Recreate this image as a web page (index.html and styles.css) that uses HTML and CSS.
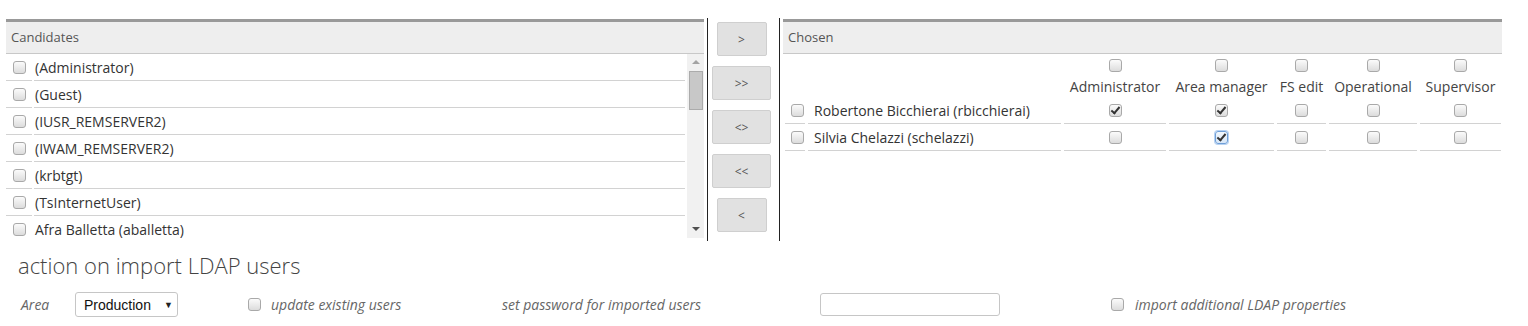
FILE: index.html
```html
<!DOCTYPE html>
<html lang="en">

<head>
    <meta charset="UTF-8">
    <title>Import LDAP users</title>
    <link rel="stylesheet" href="styles.css">
</head>

<body>
    <div class="picker">
        <div class="panel panel-left">
            <div class="panel-head">Candidates</div>
            <div class="list-wrap">
                <div class="list">
                    <div class="row"><div class="cell-cb"><input type="checkbox" class="cb"></div><div class="cell-name">(Administrator)</div></div>
                    <div class="row"><div class="cell-cb"><input type="checkbox" class="cb"></div><div class="cell-name">(Guest)</div></div>
                    <div class="row"><div class="cell-cb"><input type="checkbox" class="cb"></div><div class="cell-name">(IUSR_REMSERVER2)</div></div>
                    <div class="row"><div class="cell-cb"><input type="checkbox" class="cb"></div><div class="cell-name">(IWAM_REMSERVER2)</div></div>
                    <div class="row"><div class="cell-cb"><input type="checkbox" class="cb"></div><div class="cell-name">(krbtgt)</div></div>
                    <div class="row"><div class="cell-cb"><input type="checkbox" class="cb"></div><div class="cell-name">(TsInternetUser)</div></div>
                    <div class="row"><div class="cell-cb"><input type="checkbox" class="cb"></div><div class="cell-name">Afra Balletta (aballetta)</div></div>
                </div>
                <div class="scrollbar">
                    <span class="arrow arrow-up"></span>
                    <span class="thumb"></span>
                    <span class="arrow arrow-down"></span>
                </div>
            </div>
        </div>

        <div class="divider"></div>

        <div class="buttons">
            <button class="move">&gt;</button>
            <button class="move wide">&gt;&gt;</button>
            <button class="move wide">&lt;&gt;</button>
            <button class="move wide">&lt;&lt;</button>
            <button class="move">&lt;</button>
        </div>

        <div class="divider"></div>

        <div class="panel panel-right">
            <div class="panel-head">Chosen</div>
            <div class="chosen">
                <div class="chosen-head">
                    <div></div>
                    <div></div>
                    <div class="role"><input type="checkbox" class="cb"><span>Administrator</span></div>
                    <div class="role"><input type="checkbox" class="cb"><span>Area manager</span></div>
                    <div class="role"><input type="checkbox" class="cb"><span>FS edit</span></div>
                    <div class="role"><input type="checkbox" class="cb"><span>Operational</span></div>
                    <div class="role"><input type="checkbox" class="cb"><span>Supervisor</span></div>
                </div>
                <div class="chosen-row">
                    <div class="cell-cb"><input type="checkbox" class="cb"></div>
                    <div class="cell-name">Robertone Bicchierai (rbicchierai)</div>
                    <div class="cell-role"><input type="checkbox" class="cb" checked></div>
                    <div class="cell-role"><input type="checkbox" class="cb" checked></div>
                    <div class="cell-role"><input type="checkbox" class="cb"></div>
                    <div class="cell-role"><input type="checkbox" class="cb"></div>
                    <div class="cell-role"><input type="checkbox" class="cb"></div>
                </div>
                <div class="chosen-row">
                    <div class="cell-cb"><input type="checkbox" class="cb"></div>
                    <div class="cell-name">Silvia Chelazzi (schelazzi)</div>
                    <div class="cell-role"><input type="checkbox" class="cb"></div>
                    <div class="cell-role"><input type="checkbox" class="cb focused" checked></div>
                    <div class="cell-role"><input type="checkbox" class="cb"></div>
                    <div class="cell-role"><input type="checkbox" class="cb"></div>
                    <div class="cell-role"><input type="checkbox" class="cb"></div>
                </div>
            </div>
        </div>
    </div>

    <h2 class="import-title">action on import LDAP users</h2>

    <div class="import-form">
        <label class="lbl">Area</label>
        <span class="select-wrap">
            <select class="area-select">
                <option>Production</option>
            </select>
        </span>
        <input type="checkbox" class="cb">
        <label class="lbl">update existing users</label>
        <label class="lbl">set password for imported users</label>
        <span><input type="password" class="pwd"></span>
        <input type="checkbox" class="cb">
        <label class="lbl">import additional LDAP properties</label>
    </div>
</body>

</html>
```

FILE: styles.css
```css
body {
    font-family: 'Open Sans', 'Liberation Sans', sans-serif;
    font-size: 14px;
    color: #333;
    margin: 0;
    padding: 0;
    background-color: #ffffff;
}

.picker {
    display: flex;
    align-items: flex-start;
    margin-top: 18px;
    padding-left: 6px;
}

.panel {
    margin-top: 1px;
    border-top: 3px solid #999;
}

.panel-left {
    width: 698px;
}

.panel-right {
    width: 719px;
    margin-left: 3px;
}

.panel-head {
    height: 31px;
    line-height: 31px;
    background-color: #eeeeee;
    border-bottom: 1px solid #c8c8c8;
    padding-left: 5px;
    font-size: 13px;
    color: #555;
}

.divider {
    width: 1px;
    height: 223px;
    background-color: #222;
}

.panel-left + .divider {
    margin-left: 3px;
}

/* candidates list */
.list-wrap {
    display: flex;
    height: 184px;
}

.list {
    flex: 1;
    overflow: hidden;
}

.row {
    display: grid;
    grid-template-columns: 26px 1fr;
    column-gap: 2px;
    height: 27px;
}

.row > div,
.chosen-row > div {
    border-bottom: 1px solid #d2d2d2;
    display: flex;
    align-items: center;
}

.cell-cb {
    justify-content: center;
}

.row .cell-name {
    padding-left: 1px;
}

.scrollbar {
    width: 17px;
    margin-left: 2px;
    background-color: #f1f1f1;
    display: flex;
    flex-direction: column;
    align-items: center;
}

.arrow {
    width: 0;
    height: 0;
    border-left: 4px solid transparent;
    border-right: 4px solid transparent;
}

.arrow-up {
    margin-top: 6px;
    border-bottom: 4px solid #a3a3a3;
}

.arrow-down {
    margin-top: auto;
    margin-bottom: 7px;
    border-top: 4px solid #505050;
}

.thumb {
    width: 12px;
    height: 37px;
    margin-top: 7px;
    background-color: #c8c8c8;
    border: 1px solid #ababab;
}

/* move buttons */
.buttons {
    width: 59px;
    margin: 0 8px 0 4px;
    padding-top: 4px;
    display: flex;
    flex-direction: column;
    align-items: center;
    gap: 10px;
}

.move {
    width: 50px;
    height: 34px;
    padding: 0;
    background-color: #e1e1e1;
    border: 1px solid #cfcfcf;
    border-radius: 2px;
    font-family: 'Open Sans', sans-serif;
    font-size: 12px;
    color: #555;
}

.move.wide {
    width: 59px;
}

/* chosen table */
.chosen {
    padding-left: 2px;
}

.chosen-head,
.chosen-row {
    display: grid;
    grid-template-columns: 20px 253px 102px 105px 49px 88px 81px;
    column-gap: 3px;
}

.chosen-head {
    height: 43px;
}

.role {
    display: flex;
    flex-direction: column;
    align-items: center;
    padding-top: 5px;
    color: #444;
}

.role span {
    margin-top: 5px;
    white-space: nowrap;
}

.chosen-row {
    height: 27px;
}

.chosen-row .cell-cb {
    justify-content: flex-end;
    padding-right: 1px;
}

.chosen-row .cell-name {
    padding-left: 6px;
}

.cell-role {
    justify-content: center;
}

/* checkboxes */
.cb {
    appearance: none;
    -webkit-appearance: none;
    width: 13px;
    height: 13px;
    margin: 0;
    border: 1px solid #a9a9a9;
    border-radius: 3px;
    background: linear-gradient(#fbfbfb, #dcdcdc);
    position: relative;
    flex: none;
}

.cb:checked::after {
    content: '';
    position: absolute;
    left: 3px;
    top: 0px;
    width: 3px;
    height: 7px;
    border: solid #333;
    border-width: 0 2px 2px 0;
    transform: rotate(40deg);
}

.cb.focused {
    border-color: #6f9fd8;
    box-shadow: 0 0 0 1px #b7d2f2;
    background: linear-gradient(#f3f8fd, #d6e6f7);
}

/* import section */
.import-title {
    margin: 10px 0 0 18px;
    font-size: 22px;
    font-weight: 300;
    line-height: 28px;
    color: #444;
}

.import-form {
    display: grid;
    grid-template-columns: 54px 173px 23px 231px 318px 291px 24px auto;
    align-items: center;
    margin-top: 13px;
    padding-left: 21px;
}

.lbl {
    font-style: italic;
    color: #666;
}

.select-wrap {
    position: relative;
    display: inline-block;
    width: 103px;
}

.select-wrap::after {
    content: '\25BC';
    position: absolute;
    right: 5px;
    top: 6px;
    font-size: 9px;
    color: #222;
    pointer-events: none;
}

.area-select {
    appearance: none;
    -webkit-appearance: none;
    width: 103px;
    height: 25px;
    padding: 0 0 0 8px;
    border: 1px solid #c6c6c6;
    border-radius: 3px;
    background: #fff;
    font-family: 'Liberation Sans', Arial, sans-serif;
    font-size: 14px;
    color: #111;
}

.pwd {
    width: 180px;
    height: 23px;
    box-sizing: border-box;
    border: 1px solid #c6c6c6;
    border-radius: 3px;
}
```
